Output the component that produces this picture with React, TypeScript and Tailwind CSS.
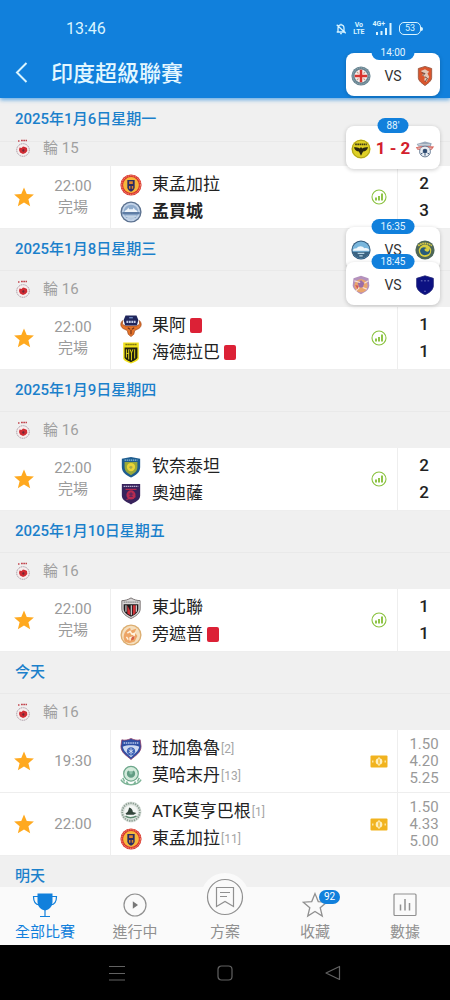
import React from "react";

type CrestName =
  | "eastBengal" | "mumbai" | "goa" | "hyderabad" | "chennaiyin" | "odisha"
  | "northEast" | "punjab" | "bengaluru" | "mohammedan" | "mohunBagan"
  | "melbourneCity" | "brisbane" | "wellington" | "adelaide"
  | "skyRound" | "mariners" | "sunset" | "victory";

const crests: Record<CrestName, React.ReactNode> = {
  eastBengal: (
    <>
      <circle cx="12" cy="12" r="11.5" fill="#d9342b" />
      <circle cx="12" cy="12" r="10.2" fill="none" stroke="#f6a58d" strokeWidth="1" strokeDasharray="1.6 1" />
      <circle cx="12" cy="12" r="8.6" fill="#f6b73c" />
      <path d="M8 6.5h8v8c0 2.4-2 4-4 4.8-2-.8-4-2.400-4-4.800z" fill="#2b2d63" />
      <path d="M10 8h4v3h-4zM9.800 13h1.600v3H9.800zM12.800 13h1.600v3h-1.600z" fill="#e0862c" />
    </>
  ),
  mumbai: (
    <>
      <circle cx="12" cy="12" r="11.500" fill="#5b718f" />
      <circle cx="12" cy="12" r="10" fill="#c2d3e8" />
      <circle cx="12" cy="12" r="8" fill="#8fabcc" />
      <path d="M5 11l3-2 1-2 1 2h4l1-2 1 2 3 2v2H5z" fill="#eef4fa" />
      <path d="M2.500 12h19v2.500h-19z" fill="#5f7da5" />
      <path d="M6 16.500h12M8 18.500h8" stroke="#eef4fa" strokeWidth="1" />
    </>
  ),
  goa: (
    <>
      <path d="M3 6C-.5 9 .5 14 5 15.500L8 17l1 4 3 2.500 3-2.500 1-4 3-1.500c4.500-1.500 5.500-6.500 2-9.500l.5 4-3.500 2h-12L2.500 10z" fill="#e5742a" stroke="#a04c20" strokeWidth=".8" />
      <path d="M6 .500h12l2 5-1.500 6h-13L4 5.500z" fill="#20265c" />
      <path d="M7 7.500h10" stroke="#c4cde8" strokeWidth="2.200" strokeDasharray="2 .7" />
      <path d="M10 3h4" stroke="#7fa0d8" strokeWidth="1.200" />
      <path d="M8.500 14l2.500 1.500M15.500 14L13 15.500M12 16v5" stroke="#6d2f19" strokeWidth="1.200" />
    </>
  ),
  hyderabad: (
    <>
      <path d="M3.500.500h17v18c-2 3-5.500 3.500-8.500 5-3-1.500-6.500-2-8.500-5z" fill="#f1e11c" />
      <path d="M6 2.800h12" stroke="#6b6613" strokeWidth="1.600" strokeDasharray="1.500 .6" />
      <path d="M5 6h14v11.500c-2 2.500-4.500 3-7 4.500-2.500-1.500-5-2-7-4.500z" fill="#20200f" />
      <path d="M7 8v9M9.500 8v11M7 12.500h2.500M11 8l1.500 4V20M14 8l-1.500 4M16 8v10" stroke="#f1e11c" strokeWidth="1" fill="none" />
    </>
  ),
  chennaiyin: (
    <>
      <path d="M2 3l10-2 10 2v9c0 6-5 9-10 11.500C7 21 2 18 2 12z" fill="#1d5c8f" />
      <path d="M5 6.500h14V12c0 5-4 7-7 9-3-2-7-4-7-9z" fill="#98a83a" />
      <circle cx="12" cy="12" r="4.500" fill="#e9d437" />
      <path d="M9.500 12l2.500-1.500 2 1.500-2 2.500z" fill="#a9a94a" />
      <path d="M5 4.500h14" stroke="#8fc1dd" strokeWidth="1.300" strokeDasharray="1.500 .7" />
    </>
  ),
  odisha: (
    <>
      <path d="M2 1h20v13c0 5-6 7-10 9.500C8 21 2 19 2 14z" fill="#38235c" />
      <path d="M4 3.600h16" stroke="#b9b0cf" strokeWidth="1.400" strokeDasharray="1.600 .6" />
      <path d="M6 7h12M7 18l10-3" stroke="#b82c50" strokeWidth="1.400" />
      <circle cx="12" cy="13" r="5" fill="#b82c50" />
      <path d="M9.500 12h5M10 14.500h4M12 10v5" stroke="#4b2560" strokeWidth="1" />
    </>
  ),
  northEast: (
    <>
      <path d="M2 4c3 0 7-1 10-3 3 2 7 3 10 3v9c0 5-5 8-10 10.500C7 21 2 18 2 13z" fill="#d9d6d6" stroke="#6e6868" strokeWidth="1" />
      <path d="M4 8h16v5c0 4-4 6.500-8 8.500C8 19.500 4 17 4 13z" fill="#1c1a1b" />
      <path d="M8 9l3 6v5l-3-2zM14 9h3v8.500L14 20z" fill="#cf2f35" />
      <path d="M6.500 9v7M12.300 9v11M17.800 9v7" stroke="#eee" strokeWidth="1.100" />
      <path d="M4 5.500h16" stroke="#777" strokeWidth="1.400" strokeDasharray="1.300 .8" />
    </>
  ),
  punjab: (
    <>
      <circle cx="12" cy="12" r="11.500" fill="#dcae71" />
      <circle cx="12" cy="12" r="10" fill="#f5dfbe" />
      <path d="M4 15c0-6 3-9 7-11l1 3 6-2-2 4 3 4-3 6-6 2-5-2z" fill="#eda566" />
      <path d="M8 10l3-2 2 3 3-1-1 4-4 1v3M7 14l2 3" stroke="#fff3df" strokeWidth="1.600" fill="none" />
      <path d="M13 14l3-1-1 4-3 1z" fill="#d45f47" />
    </>
  ),
  bengaluru: (
    <>
      <path d="M2 2c3 1 7 0 10-1.500C15 2 19 3 22 2l1 7c0 7-6 10-11 14.500C7 19 1 16 1 9z" fill="#2e4fa5" stroke="#8c335e" strokeWidth=".8" />
      <path d="M3 9.500c5-2 13-2 18 0-1 5-5 7.500-9 11.500-4-4-8-6.500-9-11.500z" fill="#cfdaf1" />
      <circle cx="12" cy="14.500" r="4.500" fill="#3d62b6" />
      <path d="M12 11v7M9.500 12.800l5 3.400M14.500 12.800l-5 3.400" stroke="#e2e9f7" strokeWidth=".9" />
      <path d="M4 5.500h16" stroke="#b8c9ec" strokeWidth="1.800" strokeDasharray="1.600 .8" />
    </>
  ),
  mohammedan: (
    <>
      <circle cx="12" cy="9.500" r="8" fill="#d3eadb" stroke="#6da78b" strokeWidth="1.300" />
      <path d="M9 6a4.500 4.500 0 106 0 4 4 0 01-6 0z" fill="#629c83" />
      <circle cx="12" cy="8.500" r="1.800" fill="#8cbfa8" />
      <path d="M1 16c2 4 6 5.500 11 5.500S21 20 23 16M3 14l2 4M21 14l-2 4M7 18l2 3M17 18l-2 3" stroke="#7db497" strokeWidth="1.600" fill="none" />
    </>
  ),
  mohunBagan: (
    <>
      <circle cx="12" cy="12" r="11.500" fill="#dce3de" />
      <circle cx="12" cy="12" r="9.600" fill="none" stroke="#8d9e93" strokeWidth="2" strokeDasharray="1.500 1.100" />
      <circle cx="12" cy="12" r="7.500" fill="#f4f6f4" />
      <path d="M6 13c2 0 3-2 4-6 3 1 4 3 4 5l4 1-3 2H7z" fill="#34463c" />
      <path d="M6 16.500c3 2 8 2 12 0" stroke="#5d8a70" strokeWidth="1.500" fill="none" />
    </>
  ),
  melbourneCity: (
    <>
      <circle cx="12" cy="12" r="11.500" fill="#65828f" />
      <circle cx="12" cy="12" r="9.800" fill="none" stroke="#9fb2ba" strokeWidth="1.200" strokeDasharray="1.400 1" />
      <circle cx="12" cy="12" r="7.800" fill="#f7efee" />
      <path d="M12 4.500v15M4.500 12h15" stroke="#d8332d" strokeWidth="3" />
      <path d="M7 7l2 2M17 7l-2 2M7 17l2-2M17 17l-2-2" stroke="#c6a087" strokeWidth="1.300" />
    </>
  ),
  brisbane: (
    <>
      <path d="M4 3l8-2.500L20 3v11c0 4-5 7-8 9.500C9 21 4 18 4 14z" fill="#d9552d" stroke="#95543d" strokeWidth="1" />
      <path d="M7 6l5-2 5 3-2 2 2 4-3 6-3-2 1-4-4-2 3-2z" fill="#e3c7b7" />
      <path d="M8 8l4 1-3 3M12 13l3 2-3 4" stroke="#6a4a42" strokeWidth="1.200" fill="none" />
    </>
  ),
  wellington: (
    <>
      <circle cx="12" cy="12" r="11.500" fill="#dfd024" />
      <circle cx="12" cy="12" r="10.500" fill="none" stroke="#8e861c" strokeWidth=".8" />
      <path d="M5 6.500h14" stroke="#413d18" strokeWidth="2" strokeDasharray="2 .6" />
      <path d="M3.500 10c3 0 5 0 7 1.500L12 9.500l1.500 2c2-1.500 4-1.500 7-1.500-1 3.500-3.500 5-6 5L12 20l-2.500-5c-2.500 0-5-1.500-6-5z" fill="#29270f" />
    </>
  ),
  adelaide: (
    <>
      <path d="M2 6l10-3 8 2-1 4H4z" fill="#9aa9ba" />
      <path d="M1 10c6-2 14-2 22-1l-3 4H3z" fill="#d7645c" />
      <circle cx="12" cy="15" r="6.500" fill="#e9eef3" stroke="#526783" strokeWidth="1" />
      <path d="M10 13l2-1 2 1v3l-2 1-2-1zM7 18l2-1M17 18l-2-1M12 20v-2" fill="#2d4a70" stroke="#2d4a70" strokeWidth="1.200" />
      <path d="M4 7h14M3 11h17" stroke="#f3f1f1" strokeWidth=".9" />
    </>
  ),
  skyRound: (
    <>
      <circle cx="12" cy="12" r="11.500" fill="#32597b" />
      <circle cx="12" cy="12" r="10.300" fill="#79b6dc" />
      <path d="M2 13c1-3 4-3 5-3 1-3 7-4 9 0 3-1 6 1 6 3z" fill="#f1f7fb" />
      <path d="M2 14h20c-1 5-5 8-10 8S3 19 2 14z" fill="#3c6482" />
      <path d="M8 16h8M10 19h4" stroke="#b9d5e5" strokeWidth="1.300" />
    </>
  ),
  mariners: (
    <>
      <circle cx="12" cy="12" r="11.500" fill="#4d6658" />
      <path d="M4 7c4-4 12-4 16 0" stroke="#dacd45" strokeWidth="2" fill="none" strokeDasharray="2 .7" />
      <circle cx="12" cy="13" r="7.500" fill="#d9ce3e" />
      <path d="M6 13c1-5 6-5 8-3-4 0-3 4 1 4 2 0 3-2 2-4 3 4 0 8-4 8-4 1-7-2-7-5z" fill="#285c7c" />
    </>
  ),
  sunset: (
    <>
      <path d="M3 4l9-3 9 3 1 9c-1 6-6 8-10 10C8 21 3 18 2 13z" fill="#b492bd" />
      <circle cx="12" cy="13" r="8" fill="#e9a56d" />
      <path d="M12 6l4 4-2 5h-4l-2-5z" fill="#9b6ea7" />
      <path d="M4 7l7 2M14 15l5 2M10 15l-4 4M16 10l5-3" stroke="#f4dfd5" strokeWidth="1.500" />
      <path d="M5 12l4 1-1 4z" fill="#d4565b" />
    </>
  ),
  victory: (
    <>
      <path d="M2 4l10-3 10 3v10c-1 5-6 8-10 9.500C8 22 3 19 2 14z" fill="#0c1182" stroke="#25297a" strokeWidth="1" />
      <path d="M7 7h2M11 7h2M15 7h2M11 19.500h2" stroke="#8a90cf" strokeWidth="1" />
    </>
  ),
};

function Crest({ name, className }: { name: CrestName; className: string }) {
  return (
    <svg viewBox="0 0 24 24" aria-hidden="true" className={`shrink-0 ${className}`}>
      {crests[name]}
    </svg>
  );
}

function LeagueLogo() {
  return (
    <svg viewBox="0 0 16 18" aria-hidden="true" className="h-[18px] w-4 shrink-0">
      <path d="M3 2h1.500M6 1.500h6" stroke="#c2474f" strokeWidth="1.400" strokeDasharray="1.800 .5" />
      <circle cx="8" cy="11" r="6.300" fill="#f7eeee" stroke="#a79aa5" strokeWidth="1" strokeDasharray="1.300 .6" />
      <path d="M4.500 8.500l2 .5L8 7.500l2 .5 2 1 .3 3-1.800 2L8 15l-3-1.500-1-2.500z" fill="#cf2b33" />
      <path d="M7 11l2-1 .5 2-1.500 1z" fill="#6c2735" />
    </svg>
  );
}

type Team = { name: string; crest: CrestName; rank?: number; bold?: boolean; redCard?: boolean };
type Match = { time: string; finished?: boolean; teams: [Team, Team]; score?: [number, number]; odds?: string[] };
type Day = { date: string; round?: number; matches: Match[] };

const days: Day[] = [
  {
    date: "2025年1月6日星期一",
    round: 15,
    matches: [{ time: "22:00", finished: true, score: [2, 3], teams: [{ name: "東孟加拉", crest: "eastBengal" }, { name: "孟買城", crest: "mumbai", bold: true }] }],
  },
  {
    date: "2025年1月8日星期三",
    round: 16,
    matches: [{ time: "22:00", finished: true, score: [1, 1], teams: [{ name: "果阿", crest: "goa", redCard: true }, { name: "海德拉巴", crest: "hyderabad", redCard: true }] }],
  },
  {
    date: "2025年1月9日星期四",
    round: 16,
    matches: [{ time: "22:00", finished: true, score: [2, 2], teams: [{ name: "钦奈泰坦", crest: "chennaiyin" }, { name: "奧迪薩", crest: "odisha" }] }],
  },
  {
    date: "2025年1月10日星期五",
    round: 16,
    matches: [{ time: "22:00", finished: true, score: [1, 1], teams: [{ name: "東北聯", crest: "northEast" }, { name: "旁遮普", crest: "punjab", redCard: true }] }],
  },
  {
    date: "今天",
    round: 16,
    matches: [
      { time: "19:30", odds: ["1.50", "4.20", "5.25"], teams: [{ name: "班加魯魯", crest: "bengaluru", rank: 2 }, { name: "莫哈末丹", crest: "mohammedan", rank: 13 }] },
      { time: "22:00", odds: ["1.50", "4.33", "5.00"], teams: [{ name: "ATK莫亨巴根", crest: "mohunBagan", rank: 1 }, { name: "東孟加拉", crest: "eastBengal", rank: 11 }] },
    ],
  },
  { date: "明天", matches: [] },
];

const STAR = "M12 1.500l3 7.300 7.800.6-6 5.100 1.900 7.700-6.700-4.200-6.700 4.200 1.900-7.700-6-5.100 7.800-.6z";

function TeamRow({ team }: { team: Team }) {
  return (
    <div className="flex h-[27px] items-center">
      <Crest name={team.crest} className="size-[22px]" />
      <span className={`ml-2.5 text-[17px] whitespace-nowrap text-[#222] ${team.bold ? "font-bold" : ""}`}>{team.name}</span>
      {team.rank && <span className="ml-px text-xs text-[#a5a5a5]">[{team.rank}]</span>}
      {team.redCard && <span role="img" aria-label="紅牌" className="ml-1 h-[15px] w-3 rounded-xs bg-[#dc2136]" />}
    </div>
  );
}

function StatsIcon() {
  return (
    <svg viewBox="0 0 16 16" className="size-4" aria-hidden="true">
      <circle cx="8" cy="8" r="7" fill="none" stroke="#8ac23f" strokeWidth="1.100" />
      <path d="M5 11.500V8.500M8 11.500V7M11 11.500V4.500" stroke="#8ac23f" strokeWidth="1.900" />
    </svg>
  );
}

function OddsIcon() {
  return (
    <svg viewBox="0 0 18 13" className="h-[13px] w-[18px]" aria-hidden="true">
      <rect x=".5" y=".5" width="17" height="12" rx="1" fill="#f1b31f" />
      <circle cx="9" cy="6.500" r="3.300" fill="#fff0bf" />
      <path d="M9 2v9" stroke="#fff0bf" strokeWidth="1" />
      <path d="M9 4.300v4.400" stroke="#f1b31f" strokeWidth="1.300" />
      <path d="M2.800 5.500v2M15.200 5.500v2" stroke="#fff0bf" strokeWidth="1.200" />
    </svg>
  );
}

function MatchRow({ match }: { match: Match }) {
  return (
    <li className="flex h-[63px] border-b border-[#eee] bg-white">
      <button type="button" aria-label="收藏" className="flex w-12 shrink-0 items-center justify-center">
        <svg viewBox="0 0 24 24" className="size-[22px]" aria-hidden="true">
          <path d={STAR} fill="#ffa91f" />
        </svg>
      </button>
      <div className="flex w-[63px] shrink-0 flex-col items-center justify-center border-r border-[#eee] pr-3 text-[15px] leading-[21px] text-[#9a9a9a]">
        <time>{match.time}</time>
        {match.finished && <span>完場</span>}
      </div>
      <div className="flex min-w-0 flex-1 flex-col justify-center pt-0.5 pl-[9px]">
        <TeamRow team={match.teams[0]} />
        <TeamRow team={match.teams[1]} />
      </div>
      <div className="flex w-9 shrink-0 items-center justify-center">{match.odds ? <OddsIcon /> : <StatsIcon />}</div>
      <div className="flex w-[53px] shrink-0 flex-col items-center justify-center border-l border-[#eee]">
        {match.score?.map((s, i) => (
          <span key={i} className="text-[17px] leading-[27px] font-medium text-[#222]">{s}</span>
        ))}
        {match.odds?.map((o, i) => (
          <span key={i} className="text-[15px] leading-[17px] text-[#999]">{o}</span>
        ))}
      </div>
    </li>
  );
}

function DaySection({ day, first }: { day: Day; first: boolean }) {
  return (
    <section>
      <h2 className={`flex items-center border-b border-[#e9e9e9] px-[15px] text-[15px] font-medium text-[#1b80cb] ${first ? "h-11" : "h-[42px]"}`}>{day.date}</h2>
      {day.round && (
        <div className={`flex h-9 items-center gap-3 px-[15px] text-[15px] text-[#a0a0a0] ${first ? "-mt-3" : ""}`}>
          <LeagueLogo />
          <span>輪 {day.round}</span>
        </div>
      )}
      <ul>
        {day.matches.map((m, i) => <MatchRow key={i} match={m} />)}
      </ul>
    </section>
  );
}

function FloatingMatch({ label, home, away, score, place }: { label: string; home: CrestName; away: CrestName; score?: string; place: string }) {
  return (
    <a href="#match" className={`absolute right-2.5 z-30 flex h-[43px] w-[94px] items-center justify-between rounded-lg bg-white px-[5px] pt-0.5 shadow-[0_1px_4px_rgba(0,0,0,0.2)] ${place}`}>
      <span className="absolute -top-2 left-1/2 -translate-x-1/2 rounded-full bg-[#1180dc] px-[9px] text-[10px] leading-[15px] text-[#e4f6ff]">{label}</span>
      <Crest name={home} className="size-5" />
      {score ? <span className="text-[17px] font-bold whitespace-nowrap text-[#d3202c]">{score}</span> : <span className="text-sm text-[#333]">VS</span>}
      <Crest name={away} className="size-5" />
    </a>
  );
}

function StatusBar() {
  return (
    <div className="flex h-[57px] items-center justify-between pr-[27px] pl-[66px] text-[#d9f4ff]">
      <time className="text-base">13:46</time>
      <div className="flex items-center">
        <svg viewBox="0 0 14 14" className="mr-1.5 size-3" fill="none" stroke="currentColor" strokeWidth="1.500" aria-hidden="true">
          <path d="M2 10.500h10M3.500 10.500V6c0-5 7-5 7 0v4.500M6 12.500h2M7 1v1M2 2l10.500 10" />
        </svg>
        <span className="mr-2 flex w-[11px] flex-col items-center text-[7px] leading-[7px] font-bold"><span>Vo</span><span>LTE</span></span>
        <span className="-mr-2.5 mb-2 text-[7px] leading-[7px] font-bold">4G+</span>
        <svg viewBox="0 0 18 14" className="mr-1.5 h-3.5 w-[18px]" stroke="currentColor" strokeWidth="2" aria-hidden="true">
          <path d="M2 10v3M6.500 9v4M11 6v7M15.500 1v12" />
        </svg>
        <span className="flex h-[13px] w-[22px] items-center justify-center rounded-[5px] border border-current text-[9px]">53</span>
        <span className="h-1 w-0.5 rounded-r-sm bg-current" />
      </div>
    </div>
  );
}

const stroke = { fill: "none", stroke: "currentColor", strokeWidth: 1.2 } as const;

function TabBar() {
  const tab = "flex flex-1 flex-col items-center gap-[3px] pt-[5px] text-[15px] leading-[22px]";
  return (
    <nav className="relative z-20 flex h-[58px] shrink-0 bg-[#fafafa] text-[#909090]">
      <a href="#all" aria-current="page" className={`${tab} text-[#1180dc]`}>
        <svg viewBox="0 0 26 26" className="size-[26px]" aria-hidden="true">
          <path d="M5.500 1.500h15v8c0 5-3 8-7.500 9-4.500-1-7.500-4-7.500-9z" fill="currentColor" />
          <path d="M6 4.500H1.500c0 5 1.200 8 5.800 8.500M20 4.500h4.500c0 5-1.200 8-5.800 8.500M13 18v6M8 24.500h10" {...stroke} />
        </svg>
        <span>全部比賽</span>
      </a>
      <a href="#live" className={tab}>
        <svg viewBox="0 0 26 26" className="size-[26px]" aria-hidden="true">
          <circle cx="13" cy="13" r="11" {...stroke} />
          <path d="M10.800 9.200l5.200 3.800-5.200 3.800z" fill="#777" />
        </svg>
        <span>進行中</span>
      </a>
      <a href="#plans" className={`${tab} relative`}>
        <span className="absolute -top-3.5 flex size-12 items-center justify-center rounded-full bg-[#fafafa]">
          <svg viewBox="0 0 38 38" className="size-[38px]" aria-hidden="true">
            <circle cx="19" cy="19" r="17.500" {...stroke} />
            <path d="M10.500 9.500h17v19L19 23.500l-8.500 5zM14 14.500h10M14 18.500h7" {...stroke} />
          </svg>
        </span>
        <span className="mt-[29px]">方案</span>
      </a>
      <a href="#favorites" className={`${tab} relative`}>
        <svg viewBox="0 0 24 24" className="size-[26px]" aria-hidden="true">
          <path d={STAR} {...stroke} />
        </svg>
        <span className="absolute top-[3px] left-1/2 ml-1 rounded-full bg-[#1180dc] px-[5px] text-[10px] leading-[14px] text-white">92</span>
        <span>收藏</span>
      </a>
      <a href="#data" className={tab}>
        <svg viewBox="0 0 26 26" className="size-[26px]" aria-hidden="true">
          <rect x="2" y="2" width="22" height="21.500" rx="1" {...stroke} />
          <path d="M8.500 12.500v6M13 7v11.500M17.500 11v7.500" {...stroke} strokeWidth="1.500" />
        </svg>
        <span>數據</span>
      </a>
    </nav>
  );
}

function SystemNav() {
  const button = "flex w-12 items-center justify-center";
  return (
    <div className="flex h-[55px] shrink-0 items-center justify-center gap-[60px] bg-black text-[#626262]">
      <button type="button" aria-label="最近" className={button}>
        <svg viewBox="0 0 16 16" className="size-4"><path d="M0 1.500h16M0 8.500h16M0 15h16" {...stroke} /></svg>
      </button>
      <button type="button" aria-label="主頁" className={button}>
        <svg viewBox="0 0 16 16" className="size-4"><rect x="1" y="1" width="14" height="14" rx="3.500" {...stroke} /></svg>
      </button>
      <button type="button" aria-label="返回" className={button}>
        <svg viewBox="0 0 16 16" className="size-4"><path d="M14.500 1.500v13L1 8z" {...stroke} strokeLinejoin="round" /></svg>
      </button>
    </div>
  );
}

export default function App() {
  return (
    <div className="relative flex h-dvh flex-col overflow-hidden bg-[#f0f0f0] font-['Roboto','Noto_Sans_CJK_TC',sans-serif]">
      <header className="relative z-20 shrink-0 bg-[#1180dc] shadow-[0_2px_4px_rgba(17,128,220,0.6)]">
        <StatusBar />
        <div className="flex h-[41px] items-start pl-3.5">
          <button type="button" aria-label="返回" className="mt-1 flex size-6 items-center text-[#d9f4ff]">
            <svg viewBox="0 0 24 24" className="size-6" fill="none" stroke="currentColor" strokeWidth="2">
              <path d="M12.500 2L3 11.500l9.500 9.500" />
            </svg>
          </button>
          <h1 className="ml-[13px] text-[22px] leading-[34px] font-medium text-[#e4f7ff]">印度超級聯賽</h1>
        </div>
      </header>
      <main className="min-h-0 flex-1 overflow-y-auto [scrollbar-width:none]">
        {days.map((d, i) => <DaySection key={d.date} day={d} first={i === 0} />)}
      </main>
      <FloatingMatch label="14:00" home="melbourneCity" away="brisbane" place="top-[53px]" />
      <FloatingMatch label="88'" home="wellington" away="adelaide" score="1 - 2" place="top-[126px]" />
      <FloatingMatch label="16:35" home="skyRound" away="mariners" place="top-[227px]" />
      <FloatingMatch label="18:45" home="sunset" away="victory" place="top-[262px]" />
      <TabBar />
      <SystemNav />
    </div>
  );
}
